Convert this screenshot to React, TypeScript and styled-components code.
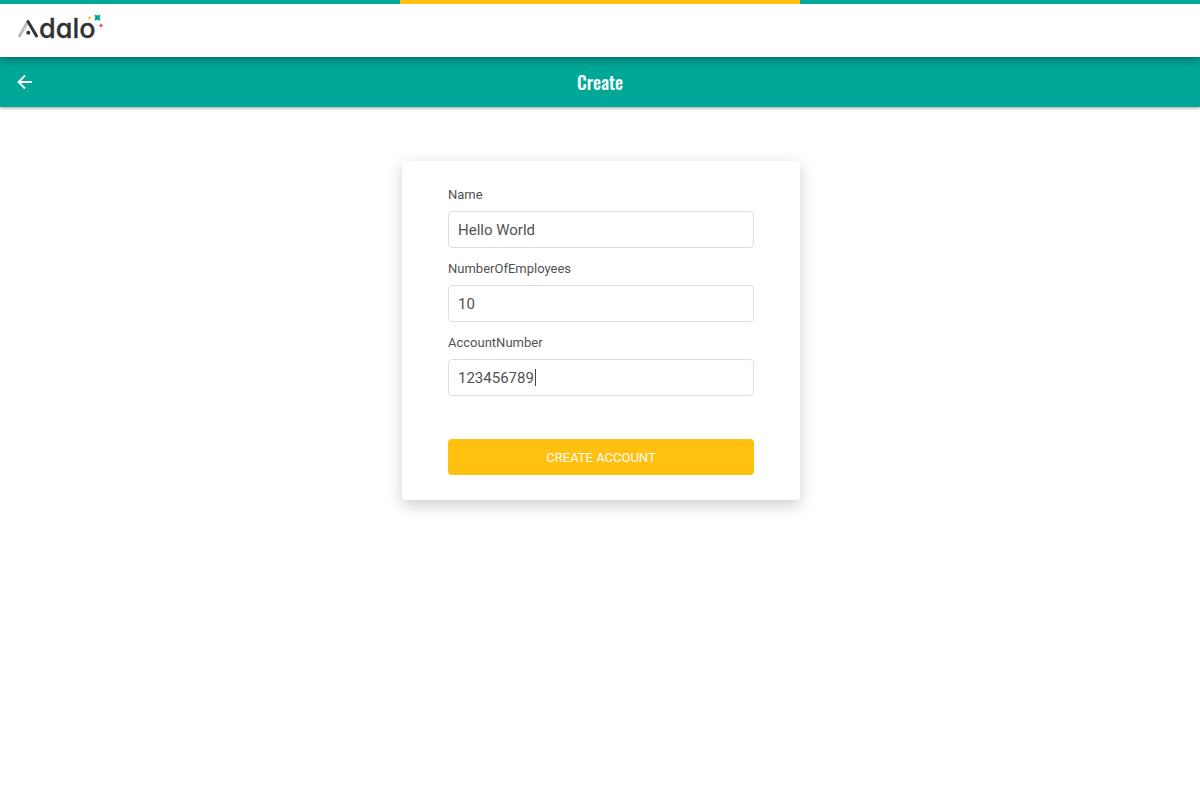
import React, { useState } from 'react';
import styled, { createGlobalStyle } from 'styled-components';

const teal = '#00a898';
const amber = '#ffc010';

const GlobalStyle = createGlobalStyle`
  *, *::before, *::after { box-sizing: border-box; }
  body {
    margin: 0;
    background: #fff;
    color: #525252;
    font-family: Roboto, "Liberation Sans", sans-serif;
  }
`;

const Stripe = styled.div`
  position: relative;
  z-index: 1;
  display: grid;
  grid-template-columns: repeat(3, 1fr);
  height: 4px;
`;

const StripePart = styled.span<{ $color: string }>`
  background: ${(p) => p.$color};
`;

const BrandBar = styled.header`
  position: relative;
  display: flex;
  align-items: flex-start;
  height: 53px;
  padding: 8px 16px;
  background: #fff;
  box-shadow: 0 2px 10px rgba(0, 0, 0, 0.4);
`;

const LogoLink = styled.a`
  display: block;
  line-height: 0;
`;

const LogoText = styled.text`
  font-family: Inter, "Liberation Sans", sans-serif;
  font-size: 27px;
  line-height: 32px;
  font-weight: 500;
  font-feature-settings: "cv11";
  fill: #333;
`;

const LogoArt = styled.svg`
  display: block;
  overflow: visible;
`;

const TitleBar = styled.div`
  display: grid;
  grid-template-columns: 1fr auto 1fr;
  align-items: center;
  height: 50px;
  padding: 0 16px;
  background: ${teal};
  color: #fff;
  box-shadow: 0 1px 3px rgba(0, 0, 0, 0.4);
`;

const BackButton = styled.button`
  display: flex;
  justify-self: start;
  padding: 0;
  border: 0;
  background: none;
  color: inherit;
  cursor: pointer;
`;

const Title = styled.h1`
  margin: 0;
  font-family: Oswald, "Liberation Sans Narrow", sans-serif;
  font-size: 18px;
  line-height: 24px;
  font-weight: 500;
`;

const Main = styled.main`
  display: flex;
  justify-content: center;
  padding: 54px 16px 40px 18px;
`;

const Card = styled.form`
  width: 35%;
  min-width: 320px;
  max-width: 398px;
  padding: 24px 46px 25px;
  border-radius: 4px;
  background: #fff;
  box-shadow: 0 5px 16px rgba(0, 0, 0, 0.2);
`;

const Field = styled.div`
  display: flex;
  flex-direction: column;
  gap: 6px;
  margin-bottom: 11px;
`;

const Label = styled.label`
  font-size: 13px;
  line-height: 20px;
`;

const InputWrap = styled.div`
  position: relative;
`;

const Input = styled.input`
  display: block;
  width: 100%;
  height: 37px;
  padding: 0 9px;
  border: 1px solid #dedede;
  border-radius: 4px;
  background: #fff;
  color: #525252;
  font-family: inherit;
  font-size: 15px;
  outline: none;
`;

const Caret = styled.span`
  position: absolute;
  top: 10px;
  left: 87px;
  width: 1px;
  height: 17px;
  background: #444;
`;

const SubmitButton = styled.button`
  display: block;
  width: 100%;
  height: 36px;
  margin-top: 43px;
  padding: 0;
  border: 0;
  border-radius: 4px;
  background: ${amber};
  color: #fff;
  font-family: inherit;
  font-size: 13px;
  cursor: pointer;
`;

function Logo() {
  return (
    <LogoArt width="90" height="34" viewBox="0 0 90 34" role="img" aria-label="Adalo">
      <g fill="none" strokeLinecap="round" strokeWidth="3">
        <path d="M3.500 24 L11.500 10" stroke="#bdbdbd" />
        <path d="M12 9.500 L20.500 24" stroke="#333" />
      </g>
      <circle cx="12.300" cy="20.700" r="2" fill="#333" />
      <LogoText x="23" y="26" stroke="#333" strokeWidth="0.300">dalo</LogoText>
      <path
        d="M79 3.200 Q81.500 4.700 84 3.200 Q82.500 5.700 84 8.200 Q81.500 6.700 79 8.200 Q80.500 5.700 79 3.200Z"
        fill={teal}
        stroke={teal}
        strokeWidth="1"
      />
      <path d="M73.500 4 L75.200 6 L73.500 8 L71.800 6Z" fill="#fcc64a" />
      <path d="M85 11.500 L87 13.500 L85 15.500 L83 13.500Z" fill="#ef5a4c" />
    </LogoArt>
  );
}

const fields = [
  { id: 'name', label: 'Name', initial: 'Hello World' },
  { id: 'employees', label: 'NumberOfEmployees', initial: '10' },
  { id: 'account', label: 'AccountNumber', initial: '123456789', active: true },
];

function TextField({ id, label, initial, active }: { id: string; label: string; initial: string; active?: boolean }) {
  const [value, setValue] = useState(initial);
  return (
    <Field>
      <Label htmlFor={id}>{label}</Label>
      <InputWrap>
        <Input id={id} type="text" value={value} onChange={(e) => setValue(e.target.value)} />
        {active && value === initial && <Caret />}
      </InputWrap>
    </Field>
  );
}

export default function App() {
  return (
    <>
      <GlobalStyle />
      <Stripe>
        <StripePart $color={teal} />
        <StripePart $color={amber} />
        <StripePart $color={teal} />
      </Stripe>
      <BrandBar>
        <LogoLink href="#">
          <Logo />
        </LogoLink>
      </BrandBar>
      <TitleBar>
        <BackButton type="button" aria-label="Back">
          <svg width="18" height="18" viewBox="0 0 18 18" fill="none" stroke="currentColor" strokeWidth="1.800">
            <path d="M16 9 H3 M9 2.500 L2.500 9 L9 15.500" />
          </svg>
        </BackButton>
        <Title>Create</Title>
      </TitleBar>
      <Main>
        <Card onSubmit={(e) => e.preventDefault()}>
          {fields.map((f) => (
            <TextField key={f.id} {...f} />
          ))}
          <SubmitButton type="submit">CREATE ACCOUNT</SubmitButton>
        </Card>
      </Main>
    </>
  );
}
